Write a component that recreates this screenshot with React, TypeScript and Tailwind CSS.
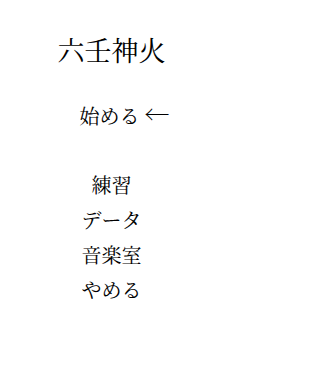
import React from 'react';

const menu = ['練習', 'データ', '音楽室', 'やめる'];

const App: React.FC = () => {
  return (
    <div
      className="w-[223px] h-[377px] bg-white text-black flex flex-col items-center"
      style={{ fontFamily: '"Noto Serif CJK JP", "Liberation Serif", "Noto Sans CJK JP", serif' }}
    >
      {/* Title */}
      <h1 className="mt-[36px] text-[27px] leading-[28px] font-normal">六壬神火</h1>

      {/* Start */}
      <div className="mt-[38px] ml-[26px] h-[22px] text-[20px] leading-[22px] whitespace-pre">
        始める{' '}
        <span className="text-[25px] leading-[22px] font-['Noto_Sans_CJK_JP',sans-serif] font-thin">←</span>
      </div>

      {/* Menu */}
      <ul className="mt-[43px] flex flex-col items-center text-[20px] leading-[35px]">
        {menu.map((item) => (
          <li key={item}>{item}</li>
        ))}
      </ul>
    </div>
  );
};

export default App;
